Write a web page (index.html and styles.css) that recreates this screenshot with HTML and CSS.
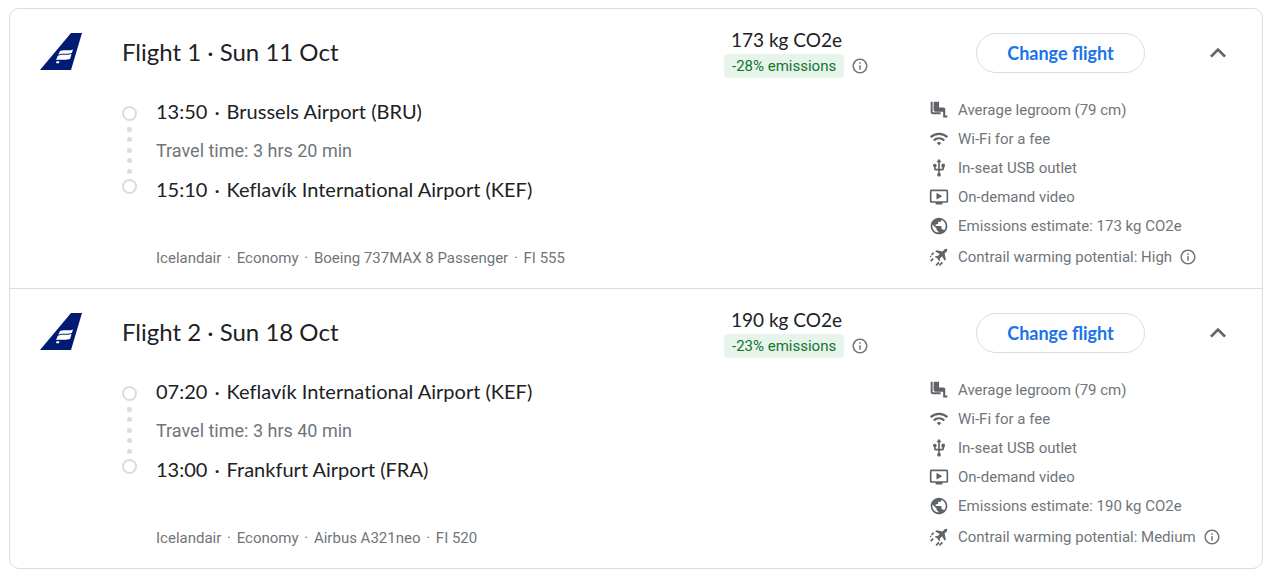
FILE: index.html
```
<!DOCTYPE html>
<html lang="en">
<head>
    <meta charset="UTF-8">
    <title>Selected flights</title>
    <link rel="stylesheet" href="styles.css">
</head>

<body>
    <!-- shared icons -->
    <svg class="sprite" aria-hidden="true">
        <symbol id="tail" viewBox="0 0 42 37">
            <path fill="#001b71" d="M31 0h11L31 37H0z"/>
            <path fill="#fff" d="M20 18c4-1.800 7 .3 13-1.500l-3 9.500c-4.500 1.500-7.500.2-11.500.8l-2.300.2 1.200-3.500z"/>
            <path fill="none" stroke="#001b71" stroke-width="1" d="M17 22.800c5-3 8.500-.3 15.500-2.500"/>
            <path fill="#fff" d="M16.500 28.200h3l-.6 2h-2.900z"/>
        </symbol>
        <symbol id="info" viewBox="0 0 24 24">
            <path d="M11 7h2v2h-2zm0 4h2v6h-2zm1-9C6.480 2 2 6.480 2 12s4.480 10 10 10 10-4.480 10-10S17.520 2 12 2zm0 18c-4.410 0-8-3.590-8-8s3.590-8 8-8 8 3.590 8 8-3.590 8-8 8z"/>
        </symbol>
        <symbol id="chevron" viewBox="0 0 24 24">
            <path d="M12 8l-6 6 1.410 1.410L12 10.830l4.590 4.580L18 14z"/>
        </symbol>
        <symbol id="seat" viewBox="0 0 24 24">
            <path d="M2 2h2.300v12.700H14V17H5a3 3 0 0 1-3-3z"/>
            <path d="M5.500 2H12v7h5.500a2 2 0 0 1 2 2v7.500H22V21h-5v-7H7.500a2 2 0 0 1-2-2z"/>
        </symbol>
        <symbol id="wifi" viewBox="0 0 24 24">
            <path d="M12 15.500a3.600 3.600 0 0 0-2.700 1.200L12 19.500l2.700-2.800a3.600 3.600 0 0 0-2.700-1.200z"/>
            <path fill="none" stroke="currentColor" stroke-width="2.700" d="M2 9.800c5.700-5.200 14.300-5.200 20 0M5.700 13.700c3.700-3.300 8.900-3.300 12.600 0"/>
        </symbol>
        <symbol id="usb" viewBox="0 0 24 24">
            <path d="M15 7v4h1v2h-3V5h2l-3-4-3 4h2v8H8v-2.070c.7-.37 1.200-1.080 1.200-1.930 0-1.210-.99-2.200-2.200-2.200S4.800 7.790 4.800 9c0 .85.5 1.560 1.200 1.930V13c0 1.110.89 2 2 2h3v3.050c-.71.37-1.200 1.100-1.200 1.950a2.200 2.200 0 0 0 4.400 0c0-.85-.49-1.580-1.200-1.950V15h3c1.110 0 2-.89 2-2v-2h1V7z"/>
        </symbol>
        <symbol id="video" viewBox="0 0 24 24">
            <path d="M21 3H3c-1.110 0-2 .89-2 2v12c0 1.100.89 2 2 2h5v2h8v-2h5c1.100 0 2-.9 2-2V5c0-1.110-.9-2-2-2zm0 14H3V5h18zM16 11l-7 4V7z"/>
        </symbol>
        <symbol id="globe" viewBox="0 0 24 24">
            <path d="M12 2C6.480 2 2 6.480 2 12s4.480 10 10 10 10-4.480 10-10S17.520 2 12 2zm-1 17.930c-3.950-.49-7-3.850-7-7.930 0-.62.08-1.210.21-1.790L9 15v1c0 1.100.9 2 2 2zm6.900-2.540c-.26-.81-1-1.390-1.900-1.390h-1v-3c0-.55-.45-1-1-1H8v-2h2c.55 0 1-.45 1-1V7h2c1.100 0 2-.9 2-2v-.41c2.930 1.190 5 4.060 5 7.410 0 2.080-.8 3.970-2.100 5.390z"/>
        </symbol>
        <symbol id="contrail" viewBox="0 0 24 24">
            <path d="M21.500 2.500c-.8-.8-2-.5-2.800.3L16.200 5.300 9 3.800 7.500 5.300l5.500 3-2.800 2.800-2-.3-1.200 1.200 3.200 1.800 1.800 3.200 1.200-1.200-.3-2 2.800-2.800 3 5.500 1.500-1.500-1.500-7.200 2.500-2.500c.8-.8 1.100-2 .3-2.800z"/>
            <path fill="none" stroke="currentColor" stroke-width="2" d="M5.500 7L3 9.500M5 14l-3 3M1.500 12l1-1M12 18.500l-3.500 3.500M16 18.500l-3.500 3.500"/>
        </symbol>
    </svg>

    <main class="flights">
        <section class="flight">
            <header class="flight-header">
                <svg class="airline-logo" role="img" aria-label="Icelandair"><use href="#tail"/></svg>
                <h2>Flight 1 · Sun 11 Oct</h2>
                <div class="emissions">
                    <p class="co2">173 kg CO2e</p>
                    <p class="change"><span class="badge">-28% emissions</span><button class="info-btn" aria-label="About emissions"><svg class="info"><use href="#info"/></svg></button></p>
                </div>
                <button class="change-btn">Change flight</button>
                <button class="toggle" aria-label="Hide details" aria-expanded="true"><svg><use href="#chevron"/></svg></button>
            </header>
            <div class="flight-body">
                <div class="route">
                    <div class="track"><i class="stop"></i><i></i><i></i><i></i><i></i><i></i><i class="stop"></i></div>
                    <div class="stops">
                        <p class="airport"><time>13:50</time><span class="dot">·</span>Brussels Airport (BRU)</p>
                        <p class="travel-time">Travel time: 3 hrs 20 min</p>
                        <p class="airport"><time>15:10</time><span class="dot">·</span>Keflavík International Airport (KEF)</p>
                        <p class="operator">Icelandair <b>·</b> Economy <b>·</b> Boeing 737MAX 8 Passenger <b>·</b> FI 555</p>
                    </div>
                </div>
                <ul class="amenities">
                    <li><svg><use href="#seat"/></svg>Average legroom (79 cm)</li>
                    <li><svg><use href="#wifi"/></svg>Wi-Fi for a fee</li>
                    <li><svg><use href="#usb"/></svg>In-seat USB outlet</li>
                    <li><svg><use href="#video"/></svg>On-demand video</li>
                    <li><svg><use href="#globe"/></svg>Emissions estimate: 173 kg CO2e</li>
                    <li><svg><use href="#contrail"/></svg>Contrail warming potential: High<button class="info-btn" aria-label="About contrails"><svg class="info"><use href="#info"/></svg></button></li>
                </ul>
            </div>
        </section>

        <section class="flight">
            <header class="flight-header">
                <svg class="airline-logo" role="img" aria-label="Icelandair"><use href="#tail"/></svg>
                <h2>Flight 2 · Sun 18 Oct</h2>
                <div class="emissions">
                    <p class="co2">190 kg CO2e</p>
                    <p class="change"><span class="badge">-23% emissions</span><button class="info-btn" aria-label="About emissions"><svg class="info"><use href="#info"/></svg></button></p>
                </div>
                <button class="change-btn">Change flight</button>
                <button class="toggle" aria-label="Hide details" aria-expanded="true"><svg><use href="#chevron"/></svg></button>
            </header>
            <div class="flight-body">
                <div class="route">
                    <div class="track"><i class="stop"></i><i></i><i></i><i></i><i></i><i></i><i class="stop"></i></div>
                    <div class="stops">
                        <p class="airport"><time>07:20</time><span class="dot">·</span>Keflavík International Airport (KEF)</p>
                        <p class="travel-time">Travel time: 3 hrs 40 min</p>
                        <p class="airport"><time>13:00</time><span class="dot">·</span>Frankfurt Airport (FRA)</p>
                        <p class="operator">Icelandair <b>·</b> Economy <b>·</b> Airbus A321neo <b>·</b> FI 520</p>
                    </div>
                </div>
                <ul class="amenities">
                    <li><svg><use href="#seat"/></svg>Average legroom (79 cm)</li>
                    <li><svg><use href="#wifi"/></svg>Wi-Fi for a fee</li>
                    <li><svg><use href="#usb"/></svg>In-seat USB outlet</li>
                    <li><svg><use href="#video"/></svg>On-demand video</li>
                    <li><svg><use href="#globe"/></svg>Emissions estimate: 190 kg CO2e</li>
                    <li><svg><use href="#contrail"/></svg>Contrail warming potential: Medium<button class="info-btn" aria-label="About contrails"><svg class="info"><use href="#info"/></svg></button></li>
                </ul>
            </div>
        </section>
    </main>
</body>

</html>
```

FILE: styles.css
```
* {
    box-sizing: border-box;
}

body {
    margin: 0;
    padding: 8px 17px 16px 9px;
    background: #fff;
    color: #202124;
    font-family: Roboto, "Liberation Sans", sans-serif;
}

h2,
p,
ul {
    margin: 0;
    padding: 0;
}

ul {
    list-style: none;
}

button {
    padding: 0;
    border: 0;
    background: none;
    cursor: pointer;
}

svg {
    display: block;
    flex: none;
    fill: currentColor;
}

.sprite {
    display: none;
}

.flights {
    border: 1px solid #dadce0;
    border-radius: 10px;
}

.flight {
    padding: 24px 28px 10px 30px;
}

.flight + .flight {
    border-top: 1px solid #dadce0;
}

/* header row */
.flight-header {
    display: flex;
    height: 40px;
    align-items: center;
}

.airline-logo {
    align-self: flex-start;
    width: 42px;
    height: 37px;
    margin-right: 40px;
}

h2 {
    flex: 1;
    padding-bottom: 2px;
    font-family: Lato, sans-serif;
    font-size: 24px;
    font-weight: 400;
    line-height: 32px;
}

.emissions {
    width: 252px;
}

.co2 {
    padding: 0 7px;
    font-family: Lato, sans-serif;
    font-size: 19px;
    line-height: 24px;
}

.change {
    display: flex;
    align-items: center;
    padding-top: 2px;
}

.badge {
    padding: 0 8px;
    border-radius: 4px;
    background: #e6f4ea;
    color: #137333;
    font-size: 15px;
    line-height: 24px;
}

.info-btn {
    margin-left: 7px;
    color: #70757a;
}

.info {
    width: 18px;
    height: 18px;
}

.change-btn {
    width: 169px;
    height: 40px;
    border: 1px solid #dadce0;
    border-radius: 20px;
    color: #1a73e8;
    font-family: Lato, sans-serif;
    font-size: 18px;
    font-weight: 700;
}

.toggle {
    margin-left: 57px;
    color: #5f6368;
}

.toggle svg {
    width: 32px;
    height: 32px;
}

/* details */
.flight-body {
    display: flex;
    justify-content: space-between;
    padding-top: 19px;
}

.route {
    display: flex;
    gap: 19px;
    padding-left: 82px;
}

.track {
    display: flex;
    flex-direction: column;
    align-items: center;
    justify-content: space-between;
    width: 15px;
    height: 88px;
    margin-top: 14px;
}

.track i {
    width: 5px;
    height: 5px;
    border-radius: 50%;
    background: #dadce0;
}

.track .stop {
    width: 15px;
    height: 15px;
    border: 2px solid #dadce0;
    background: none;
}

.stops p {
    line-height: 39px;
}

.airport {
    font-family: Lato, sans-serif;
    font-size: 20px;
    font-variant-ligatures: none;
}

.dot {
    margin: 0 7px;
}

.travel-time {
    color: #70757a;
    font-size: 18px;
}

.operator {
    padding-top: 30px;
    color: #70757a;
    font-size: 15px;
}

.operator b {
    margin: 0 2px;
    font-weight: 400;
}

.amenities {
    width: 305px;
    padding-top: 3px;
    color: #70757a;
    font-size: 15px;
    white-space: nowrap;
}

.amenities li {
    display: flex;
    align-items: center;
    height: 29px;
}

.amenities li:last-child {
    height: 33px;
}

.amenities li > svg {
    width: 20px;
    height: 20px;
    margin-right: 9px;
    color: #5f6368;
}
```
